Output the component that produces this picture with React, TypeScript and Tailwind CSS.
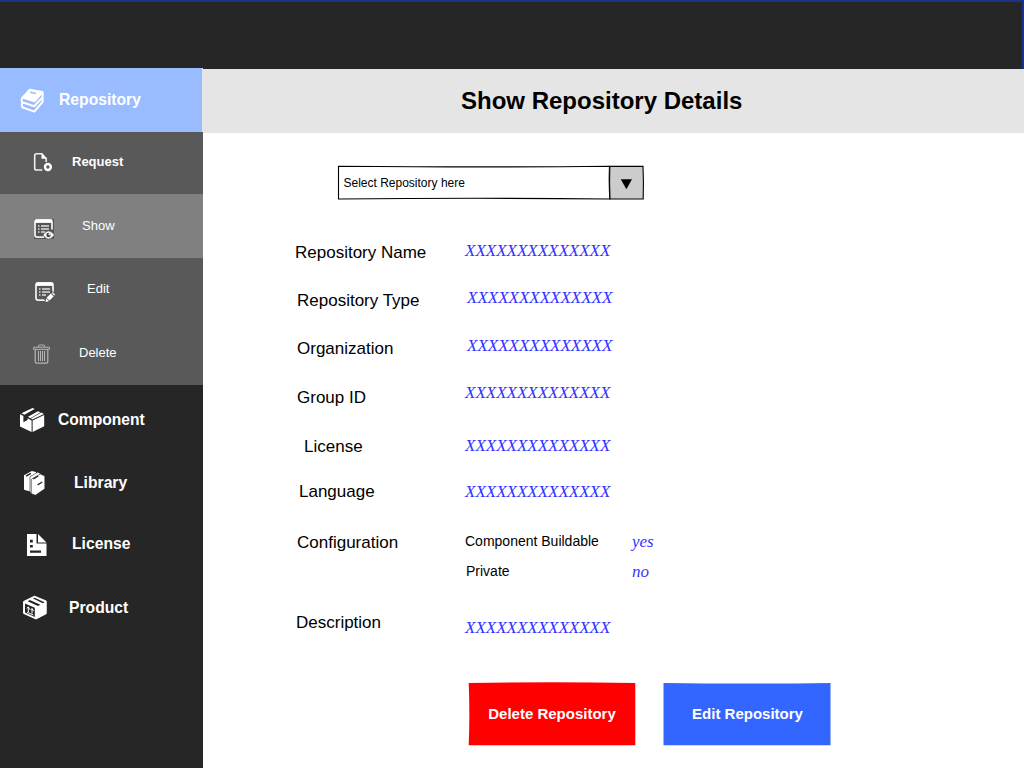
import type { ReactNode } from "react";

const X = "XXXXXXXXXXXXXX";

function BooksIcon() {
  return (
    <svg className="ml-5 mt-5 h-[26px] w-[25px] shrink-0" viewBox="0 0 25 26" fill="none" stroke="#fff" strokeWidth="2" strokeLinejoin="round">
      <path d="M9.8 1.8 22.4 4 14.6 13.4 2.4 9.6Z" fill="#fff" />
      <path d="M10 4.3 16 5.4" stroke="#99bbff" strokeWidth="1.5" />
      <path d="M2 10Q1.2 12.6 2.2 14.2L14.3 18.2 22.6 9.2M22.6 4V9.2M2.2 14.6Q1.2 17 2.3 19.2L14.3 23.6 22.6 13.8V9.5" />
    </svg>
  );
}

function FileAddIcon() {
  return (
    <svg className="ml-[33px] mt-[20px] h-[21px] w-5 shrink-0" viewBox="0 0 20 21" fill="none" stroke="#eee" strokeWidth="1.6">
      <path d="M9.3 18H3.5Q1.7 18 1.7 16.2V3.6Q1.7 1.8 3.5 1.8H8.8L13.2 6.5V10" />
      <path d="M8.5 1.5V6.8H13.8Z" fill="#fff" stroke="none" />
      <circle cx="14.9" cy="15" r="2.9" stroke="#fff" strokeWidth="2.5" />
    </svg>
  );
}

function ListLines() {
  return (
    <>
      <rect x="0" y="0" width="19" height="19" rx="2" fill="#555" />
      <path d="M10 18.1H3Q1 18.1 1 16.1V3Q1 1 3 1H16Q18 1 18 3V10.5" stroke="#eee" strokeWidth="1.8" />
      <path d="M1 2.3H18" stroke="#fff" strokeWidth="3.2" />
      <path d="M4 7H5.5M7 7H15M4 10H5.5M7 10H15M4 13H5.5M7 13H11" stroke="#ddd" strokeWidth="1.5" />
    </>
  );
}

function ShowIcon() {
  return (
    <svg className="ml-[34px] mt-[25px] h-[21px] w-[21px] shrink-0" viewBox="0 0 21 21" fill="none">
      <rect width="20" height="20" fill="#555" />
      <ListLines />
      <path d="M9 16Q14.5 8 20.3 16 14.5 24 9 16Z" fill="#fff" stroke="#555" strokeWidth=".6" />
      <circle cx="14.5" cy="16" r="2.2" fill="#444" />
      <circle cx="15.4" cy="15.2" r="1" fill="#fff" />
    </svg>
  );
}

function EditIcon() {
  return (
    <svg className="ml-[35px] mt-[24px] h-[21px] w-[21px] shrink-0" viewBox="0 0 21 21" fill="none">
      <ListLines />
      <path d="M11 19.5 19.5 11" stroke="#595959" strokeWidth="5.6" />
      <path d="M13 17.2 17.2 13" stroke="#fff" strokeWidth="4" />
      <path d="M17.8 12.4 19 11.2" stroke="#ddd" strokeWidth="3.6" />
      <path d="M11.2 16.2 14 19.2 10.6 20Z" fill="#fff" />
    </svg>
  );
}

function TrashIcon() {
  return (
    <svg className="ml-[33px] mt-[22px] h-5 w-[17px] shrink-0" viewBox="0 0 17 20" fill="none" stroke="#b5b5b5" strokeWidth="1">
      <path d="M.5 5.3V3.5Q.5 3.2 1 3.2H16Q16.5 3.2 16.5 3.5V5.3ZM5.5 3V1.8Q5.5 1 6.3 1H10.7Q11.5 1 11.5 1.8V3" />
      <path d="M2.2 5.3V17.8Q2.2 19.2 3.6 19.2H13.4Q14.8 19.2 14.8 17.8V5.3" strokeWidth="1.2" />
      <path d="M5.5 7V17M7.5 7V17M9.5 7V17M11.5 7V17" />
    </svg>
  );
}

function BoxIcon() {
  return (
    <svg className="ml-5 mt-[22px] h-[26px] w-[25px] shrink-0" viewBox="0 0 25 26" fill="#fff">
      <path d="M0 7.2 3.4 9V15.2L7.6 13V11.2L11.6 13.4V25L0 19.4Z" />
      <path d="M12.6 13.4 24.2 8V19.2L12.6 25Z" />
      <path d="M1.4 6.2 12.6.9 14.6 2 4.3 7.7Z" />
      <path d="M8 9.8 18 4.2 20.4 5.2 10.4 11.2ZM11 11.6 21.2 5.6 23.9 7.1 12.3 12.6Z" />
    </svg>
  );
}

function LibraryIcon() {
  return (
    <svg className="ml-[23px] mt-[20px] h-[26px] w-[23px] shrink-0" viewBox="0 0 23 26" fill="#fff">
      <path d="M1 5.2 8.8 1.1 13 2.1V4L7.4 7.5V21.6L1.6 20Q.9 19.7 1 18.8Z" />
      <path d="M7 6.8 14.6 2.2 17.4 3.4V14L9.2 23.6 7 22.6Z" stroke="#262626" strokeWidth=".6" />
      <path d="M8.6 9 17.4 4 21.8 6V18.8L12.4 25.2 9 24Q8.3 23.8 8.3 23V9.8Z" stroke="#262626" strokeWidth=".6" />
      <path d="M3 6.2 7.8 3.4M10.4 8.9 15.2 6M14.6 14.8 19.3 12" stroke="#262626" strokeWidth="1.4" />
    </svg>
  );
}

function LicenseIcon() {
  return (
    <svg className="ml-[27px] mt-[22px] h-[22px] w-5 shrink-0" viewBox="0 0 20 22" fill="#fff">
      <path d="M0 0H9.5V9.5H19.5V22H0Z" />
      <path d="M11 0 19.5 8.4H11Z" />
      <path d="M3 5.8H5.8V8.6H3ZM3 11H5.8V13.6H3ZM3 16.6H14V18.8H3Z" fill="#262626" />
    </svg>
  );
}

function ProductIcon() {
  return (
    <svg className="ml-[22px] mt-[23px] h-[25px] w-[26px] shrink-0" viewBox="0 0 26 25">
      <path d="M12.5 1.2 24.2 6V18.7L14 24 1.6 18.4V6.5Z" fill="#fff" stroke="#fff" strokeLinejoin="round" />
      <path d="M3 8.6 12.8 12.8V22L3 17.5Z" fill="#262626" />
      <path d="M5.6 6.2 7.8 5.1 18.4 9.7 16 10.9ZM11 3.6 12.6 2.8 22.6 7.3 20.8 8.2Z" fill="#262626" />
      <path d="M6.3 17V12.2M10 18.5V13.8M4.9 13.4 6.3 11.8 7.7 14.5M8.6 15.1 10 13.4 11.4 16.1M5 17.2 11.4 20" fill="none" stroke="#fff" strokeWidth="1" />
    </svg>
  );
}

function NavItem({ icon, label, className, textClass }: { icon: ReactNode; label: string; className: string; textClass: string }) {
  return (
    <a className={`flex items-start text-white ${className}`}>
      <span className="flex w-[58px] shrink-0">{icon}</span>
      <span className={`whitespace-nowrap leading-5 ${textClass}`}>{label}</span>
    </a>
  );
}

const value = "font-['Liberation_Serif',serif] text-[17px] italic leading-5 text-[#3333ff]";

function Detail({ label, row, indent, offset, children }: { label: string; row: string; indent: string; offset: string; children: ReactNode }) {
  return (
    <div className={`flex items-start ${row}`}>
      <dt className={`w-[262px] shrink-0 whitespace-nowrap text-[17px] leading-5 ${indent}`}>{label}</dt>
      <dd className={offset}>{children}</dd>
    </div>
  );
}

export default function App() {
  return (
    <div className="flex h-[768px] w-[1024px] flex-col overflow-hidden bg-white font-['Liberation_Sans',Arial,sans-serif] text-black">
      <header className="h-[68px] shrink-0 border-r-2 border-t-2 border-[#1c3285] bg-[#262626]" />
      <div className="flex min-h-0 flex-1">
        <aside className="w-[203px] shrink-0 bg-[#262626]">
          <nav>
            <NavItem icon={<BooksIcon />} label="Repository" className="h-16 border-r border-[#e5e5e5] bg-[#99bbff]" textClass="ml-px mt-[22px] text-[15.7px] font-bold" />
            <NavItem icon={<FileAddIcon />} label="Request" className="h-[62px] bg-[#595959]" textClass="ml-[14px] mt-[20px] text-[13px] font-bold" />
            <NavItem icon={<ShowIcon />} label="Show" className="h-16 bg-[#808080]" textClass="ml-6 mt-[22px] text-[13px]" />
            <NavItem icon={<EditIcon />} label="Edit" className="h-16 bg-[#595959]" textClass="ml-[29px] mt-[21px] text-[13px]" />
            <NavItem icon={<TrashIcon />} label="Delete" className="h-[63px] bg-[#595959]" textClass="ml-[21px] mt-[21px] text-[13px]" />
            <NavItem icon={<BoxIcon />} label="Component" className="h-[65px]" textClass="mt-[25px] text-[15.6px] font-bold" />
            <NavItem icon={<LibraryIcon />} label="Library" className="h-[62px]" textClass="ml-4 mt-[23px] text-[15.7px] font-bold" />
            <NavItem icon={<LicenseIcon />} label="License" className="h-[60px]" textClass="ml-[14px] mt-[22px] text-[15.7px] font-bold" />
            <NavItem icon={<ProductIcon />} label="Product" className="h-[64px]" textClass="ml-[11px] mt-[26px] text-[15.7px] font-bold" />
          </nav>
        </aside>
        <main className="flex flex-1 flex-col">
          <div className="flex h-[65px] shrink-0 flex-col bg-[#e5e5e5]">
            <div className="h-px border-r-2 border-[#1c3285] bg-[#262626]" />
            <h1 className="ml-[258px] mt-[18px] text-2xl font-bold leading-7">Show Repository Details</h1>
          </div>
          <button className="ml-[134px] mt-[32px] grid h-[35px] w-[308px] shrink-0 text-left">
            <svg className="col-start-1 row-start-1 h-[35px] w-[308px]" viewBox="0 0 308 35" stroke="#000" strokeWidth="1.1">
              <path d="M1.5 1.2Q150 2.5 272.5 1.3Q271.8 17 272.8 34Q140 32.6 1.5 34Z" fill="#fff" />
              <path d="M272.8 1.2L306 1.4Q306.8 17 306.2 34H273Q272.2 17 272.8 1.2Z" fill="#ccc" />
              <path d="M283.8 14.3H295L289.4 24.3Z" fill="#000" stroke="none" />
            </svg>
            <span className="col-start-1 row-start-1 pl-[6.5px] pt-2 text-xs leading-5">Select Repository here</span>
          </button>
          <dl className="mt-[43px] h-[400px] shrink-0">
            <Detail label="Repository Name" row="h-12" indent="pl-[92px]" offset="-mt-0.5"><p className={value}>{X}</p></Detail>
            <Detail label="Repository Type" row="h-12" indent="pl-[94px]" offset="-mt-[3px] ml-0.5"><p className={value}>{X}</p></Detail>
            <Detail label="Organization" row="h-[49px]" indent="pl-[94px]" offset="-mt-[3px] ml-0.5"><p className={value}>{X}</p></Detail>
            <Detail label="Group ID" row="h-[49px]" indent="pl-[94px]" offset="-mt-[5px]"><p className={value}>{X}</p></Detail>
            <Detail label="License" row="h-[45px]" indent="pl-[101px]" offset="-mt-px"><p className={value}>{X}</p></Detail>
            <Detail label="Language" row="h-[51px]" indent="pl-[96px]" offset=""><p className={value}>{X}</p></Detail>
            <Detail label="Configuration" row="h-20" indent="pl-[94px]" offset="-mt-px">
              <div className="flex h-[30px]">
                <span className="-mt-px w-[167px] text-sm leading-5">Component Buildable</span>
                <span className={value}>yes</span>
              </div>
              <div className="flex">
                <span className="-mt-px w-[167px] pl-px text-sm leading-5">Private</span>
                <span className={value}>no</span>
              </div>
            </Detail>
            <Detail label="Description" row="h-[30px]" indent="pl-[93px]" offset="mt-[5px]"><p className={value}>{X}</p></Detail>
          </dl>
          <div className="ml-[265px] mt-[39px] flex gap-[27px] text-[15px] font-bold leading-5 text-white">
            <button className="grid h-16 w-[168px]">
              <svg className="col-start-1 row-start-1 h-16 w-[168px]" viewBox="0 0 168 64">
                <path d="M.7 1Q84-.4 167.3 1V63.3H.7Q2 32 .7 1Z" fill="#f00" />
              </svg>
              <span className="z-10 col-start-1 row-start-1 self-center">Delete Repository</span>
            </button>
            <button className="grid h-16 w-[168px]">
              <svg className="col-start-1 row-start-1 h-16 w-[168px]" viewBox="0 0 168 64">
                <path d="M.5 1Q84 2.2 167.5 1V63.3H.5Z" fill="#3366ff" />
              </svg>
              <span className="z-10 col-start-1 row-start-1 self-center pl-px">Edit Repository</span>
            </button>
          </div>
        </main>
      </div>
    </div>
  );
}
